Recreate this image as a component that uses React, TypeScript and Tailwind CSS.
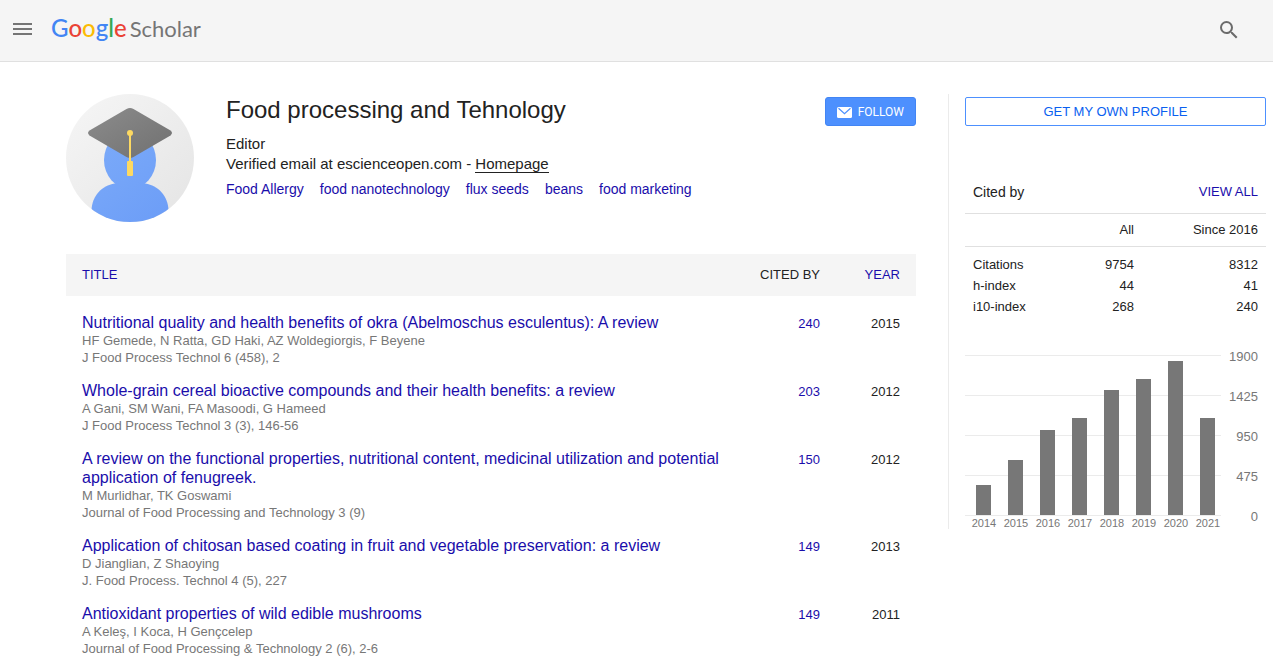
import React from 'react';

type Publication = {
  title: string;
  authors: string;
  venue: string;
  citedBy: number;
  year: number;
};

const publications: Publication[] = [
  {
    title: 'Nutritional quality and health benefits of okra (Abelmoschus esculentus): A review',
    authors: 'HF Gemede, N Ratta, GD Haki, AZ Woldegiorgis, F Beyene',
    venue: 'J Food Process Technol 6 (458), 2',
    citedBy: 240,
    year: 2015,
  },
  {
    title: 'Whole-grain cereal bioactive compounds and their health benefits: a review',
    authors: 'A Gani, SM Wani, FA Masoodi, G Hameed',
    venue: 'J Food Process Technol 3 (3), 146-56',
    citedBy: 203,
    year: 2012,
  },
  {
    title:
      'A review on the functional properties, nutritional content, medicinal utilization and potential application of fenugreek.',
    authors: 'M Murlidhar, TK Goswami',
    venue: 'Journal of Food Processing and Technology 3 (9)',
    citedBy: 150,
    year: 2012,
  },
  {
    title: 'Application of chitosan based coating in fruit and vegetable preservation: a review',
    authors: 'D Jianglian, Z Shaoying',
    venue: 'J. Food Process. Technol 4 (5), 227',
    citedBy: 149,
    year: 2013,
  },
  {
    title: 'Antioxidant properties of wild edible mushrooms',
    authors: 'A Keleş, I Koca, H Gençcelep',
    venue: 'Journal of Food Processing & Technology 2 (6), 2-6',
    citedBy: 149,
    year: 2011,
  },
];

const interests = ['Food Allergy', 'food nanotechnology', 'flux seeds', 'beans', 'food marketing'];

const metrics = [
  { label: 'Citations', all: 9754, since: 8312 },
  { label: 'h-index', all: 44, since: 41 },
  { label: 'i10-index', all: 268, since: 240 },
];

// Bar heights in chart pixels, 160px = 1900 citations
const bars = [
  { year: 2014, height: 30 },
  { year: 2015, height: 55 },
  { year: 2016, height: 85 },
  { year: 2017, height: 97 },
  { year: 2018, height: 125 },
  { year: 2019, height: 136 },
  { year: 2020, height: 154 },
  { year: 2021, height: 97 },
];

const ticks = [1900, 1425, 950, 475, 0];

function Logo() {
  return (
    <a
      href="#home"
      aria-label="Google Scholar"
      className="mb-[5px] flex items-baseline gap-[3px] font-['Lato',sans-serif] leading-8"
    >
      <span className="text-2xl font-medium">
        <span className="text-[#4285f4]">G</span>
        <span className="text-[#ea4335]">o</span>
        <span className="text-[#fbbc05]">o</span>
        <span className="text-[#4285f4]">g</span>
        <span className="text-[#34a853]">l</span>
        <span className="text-[#ea4335]">e</span>
      </span>
      <span className="text-[22px] text-[#757575]">Scholar</span>
    </a>
  );
}

function Header() {
  return (
    <header className="flex h-[62px] items-center border-b border-[#e0e0e0] bg-[#f5f5f5] pr-8 pl-[13px]">
      <button type="button" aria-label="Menu" className="mr-[18px] -mt-1">
        <svg width="20" height="14" viewBox="0 0 20 14" className="block fill-[#757575]">
          <path d="M0 1h19v2H0zM0 6h19v2H0zM0 11h19v2H0z" />
        </svg>
      </button>
      <Logo />
      <button type="button" aria-label="Search" className="-mt-0.5 ml-auto">
        <svg width="24" height="24" viewBox="0 0 24 24" className="block fill-[#6b6b6b]">
          <path d="M15.5 14h-.79l-.28-.27A6.47 6.47 0 0 0 16 9.5 6.5 6.5 0 1 0 9.5 16c1.61 0 3.09-.59 4.23-1.57l.27.28v.79l5 4.99L20.49 19l-4.99-5zm-6 0C7.01 14 5 11.99 5 9.5S7.01 5 9.5 5 14 7.01 14 9.5 11.99 14 9.5 14z" />
        </svg>
      </button>
    </header>
  );
}

function Avatar() {
  return (
    <svg width="128" height="128" viewBox="0 0 128 128" className="shrink-0">
      <defs>
        <linearGradient id="disc" x1="0" y1="0" x2="1" y2="1">
          <stop offset="0.1" stopColor="#f4f4f4" />
          <stop offset="0.9" stopColor="#e6e6e6" />
        </linearGradient>
        <linearGradient id="person" gradientUnits="userSpaceOnUse" x1="30" y1="45" x2="100" y2="128">
          <stop offset="0" stopColor="#7baaf9" />
          <stop offset="1" stopColor="#6c9df7" />
        </linearGradient>
        <linearGradient id="cap" x1="0" y1="0" x2="1" y2="1">
          <stop offset="0" stopColor="#8c8c8c" />
          <stop offset="1" stopColor="#707070" />
        </linearGradient>
        <clipPath id="round">
          <circle cx="64" cy="64" r="64" />
        </clipPath>
      </defs>
      <g clipPath="url(#round)">
        <rect width="128" height="128" fill="url(#disc)" />
        <ellipse cx="64" cy="66" rx="26" ry="29" fill="url(#person)" />
        <path
          d="M25.5 128V116C26 102 36 91.5 48.5 89.5H79.5C92 91.5 102 102 102.5 116V128Z"
          fill="url(#person)"
        />
        <path
          d="M60.5 15Q64 13 67.5 15L104.5 36.6Q107.5 39 104.5 41.4L67.5 63Q64 65 60.5 63L23.5 41.4Q20.5 39 23.5 36.6Z"
          fill="url(#cap)"
        />
        <path d="M64 39v30" stroke="#fdd962" strokeWidth="2" />
        <circle cx="64" cy="39" r="3" fill="#fdd962" />
        <rect x="61" y="67" width="6" height="15" rx="1" fill="#fdd962" />
      </g>
    </svg>
  );
}

function Profile() {
  return (
    <section className="flex items-start">
      <Avatar />
      <div className="ml-8 flex-1">
        <h1 className="text-2xl leading-8">Food processing and Tehnology</h1>
        <div className="mt-2 text-[15px] leading-5">
          <p>Editor</p>
          <p>
            Verified email at escienceopen.com -{' '}
            <a href="#homepage" className="border-b border-[#222]">
              Homepage
            </a>
          </p>
        </div>
        <div className="mt-[5px] flex flex-wrap gap-x-4 leading-5 text-[#1a0dab]">
          {interests.map((interest) => (
            <a key={interest} href="#interest">
              {interest}
            </a>
          ))}
        </div>
      </div>
      <button
        type="button"
        className="mt-[3px] flex h-[29px] items-center gap-[6px] rounded-[3px] border border-[#4285f4] bg-[#4d90fe] px-[11px] pt-px font-['Roboto',sans-serif] text-xs text-white"
      >
        <svg width="15" height="11" viewBox="0 0 15 11">
          <rect width="15" height="11" rx="1.5" fill="#fff" />
          <path d="M1.5 1.3L7.5 6.8L13.5 1.3" fill="none" stroke="#4d90fe" strokeWidth="1.2" />
        </svg>
        FOLLOW
      </button>
    </section>
  );
}

function Publications() {
  return (
    <table className="mt-8 w-full border-collapse text-[13px]">
      <thead>
        <tr className="h-[42px] bg-[#f5f5f5]">
          <th className="pl-4 text-left font-normal">
            <a href="#title" className="text-[#1a0dab]">
              TITLE
            </a>
          </th>
          <th className="w-[100px] text-right font-normal">CITED BY</th>
          <th className="w-24 pr-4 text-right font-normal">
            <a href="#year" className="text-[#1a0dab]">
              YEAR
            </a>
          </th>
        </tr>
      </thead>
      <tbody>
        <tr className="h-[9px]" />
        {publications.map((pub) => (
          <tr key={pub.title} className="align-top">
            <td className="pt-2 pb-[7px] pl-4">
              <a href="#paper" className="block text-base leading-[19px] text-[#1a0dab]">
                {pub.title}
              </a>
              <div className="leading-[17px] text-[#777]">{pub.authors}</div>
              <div className="leading-[17px] text-[#777]">{pub.venue}</div>
            </td>
            <td className="pt-[9px] text-right leading-[19px]">
              <a href="#citations" className="text-[#1a0dab]">
                {pub.citedBy}
              </a>
            </td>
            <td className="pt-[9px] pr-4 text-right leading-[19px]">{pub.year}</td>
          </tr>
        ))}
      </tbody>
    </table>
  );
}

function CitationChart() {
  return (
    <svg width="301" height="181" viewBox="0 0 301 181" className="mt-[30px] block">
      {ticks.map((tick, i) => (
        <g key={tick}>
          <rect x="0" y={7 + i * 40} width="256" height="1" fill="#ebebeb" />
          <text x="293" y={13 + i * 40} textAnchor="end" fontSize="13" fill="#777">
            {tick}
          </text>
        </g>
      ))}
      {bars.map((bar, i) => (
        <g key={bar.year}>
          <rect x={11 + i * 32} y={167 - bar.height} width="15" height={bar.height} fill="#777" />
          <text x={19 + i * 32} y="179" textAnchor="middle" fontSize="11" fill="#777">
            {bar.year}
          </text>
        </g>
      ))}
    </svg>
  );
}

function Sidebar() {
  return (
    <aside className="w-[318px] shrink-0 border-l border-[#ebebeb] pt-[3px] pl-4">
      <button
        type="button"
        className="h-[29px] w-full rounded-[2px] border border-[#4d90fe] pt-px text-[13px] text-[#0a5ff0]"
      >
        GET MY OWN PROFILE
      </button>
      <div className="mt-[45px] flex h-[42px] items-center justify-between px-2">
        <h2 className="text-sm">Cited by</h2>
        <a href="#all" className="text-[13px] text-[#1a0dab]">
          VIEW ALL
        </a>
      </div>
      <table className="w-full border-collapse text-[13px]">
        <thead>
          <tr className="h-[33px] border-y border-[#e0e0e0]">
            <th />
            <th className="text-right font-normal">All</th>
            <th className="w-[132px] pr-2 text-right font-normal">Since 2016</th>
          </tr>
        </thead>
        <tbody>
          <tr className="h-2" />
          {metrics.map((metric) => (
            <tr key={metric.label} className="h-[21px]">
              <td className="pl-2">{metric.label}</td>
              <td className="text-right">{metric.all}</td>
              <td className="pr-2 text-right">{metric.since}</td>
            </tr>
          ))}
        </tbody>
      </table>
      <CitationChart />
    </aside>
  );
}

export default function App() {
  return (
    <div className="bg-white font-['Liberation_Sans',Arial,sans-serif] text-sm text-[#222]">
      <Header />
      <div className="flex items-start gap-8 pt-8 pr-[7px] pl-[66px]">
        <main className="min-w-0 flex-1">
          <Profile />
          <Publications />
        </main>
        <Sidebar />
      </div>
    </div>
  );
}
